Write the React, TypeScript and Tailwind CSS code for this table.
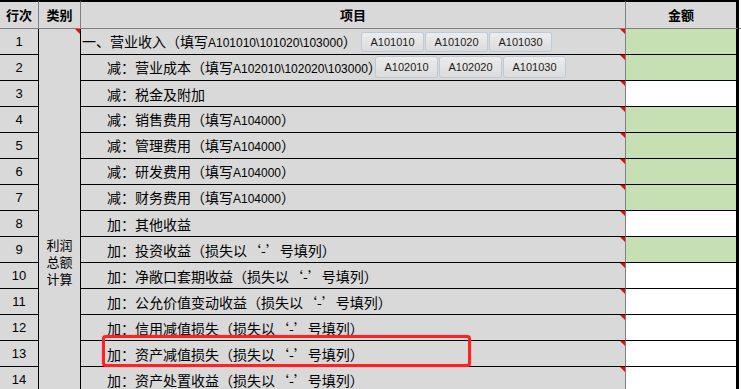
import React from "react";

type Row = {
  n: number;
  text: string;
  indent: boolean;
  green: boolean;
};

const rows: Row[] = [
  { n: 1, text: "一、营业收入（填写A101010\\101020\\103000）", indent: false, green: true },
  { n: 2, text: "减：营业成本（填写A102010\\102020\\103000）", indent: true, green: true },
  { n: 3, text: "减：税金及附加", indent: true, green: false },
  { n: 4, text: "减：销售费用（填写A104000）", indent: true, green: true },
  { n: 5, text: "减：管理费用（填写A104000）", indent: true, green: true },
  { n: 6, text: "减：研发费用（填写A104000）", indent: true, green: true },
  { n: 7, text: "减：财务费用（填写A104000）", indent: true, green: true },
  { n: 8, text: "加：其他收益", indent: true, green: false },
  { n: 9, text: "加：投资收益（损失以‘-’号填列）", indent: true, green: true },
  { n: 10, text: "加：净敞口套期收益（损失以‘-’号填列）", indent: true, green: false },
  { n: 11, text: "加：公允价值变动收益（损失以‘-’号填列）", indent: true, green: false },
  { n: 12, text: "加：信用减值损失（损失以‘-’号填列）", indent: true, green: false },
  { n: 13, text: "加：资产减值损失（损失以‘-’号填列）", indent: true, green: false },
  { n: 14, text: "加：资产处置收益（损失以‘-’号填列）", indent: true, green: false },
];

// Latin letters and digits are set in a narrower Latin face, the rest in the CJK face.
function CellText({ text }: { text: string }) {
  const parts = text.split(/([A-Za-z0-9\\]+)/).filter((p) => p.length > 0);
  return (
    <span className="whitespace-nowrap leading-[16px] text-black">
      {parts.map((p, i) =>
        /^[A-Za-z0-9\\]+$/.test(p) ? (
          <span key={i} className="font-['Liberation_Sans',sans-serif] text-[12px]">
            {p}
          </span>
        ) : (
          <span key={i} className="font-['Noto_Sans_CJK_SC',sans-serif] text-[14px]">
            {p}
          </span>
        )
      )}
    </span>
  );
}

function CommentMark() {
  return (
    <span className="absolute right-0 top-0 h-0 w-0 border-l-[5px] border-t-[5px] border-l-transparent border-t-[#ff0000]" />
  );
}

function SheetButton({ label, tall }: { label: string; tall: boolean }) {
  return (
    <div
      className={
        tall
          ? "flex h-[22px] w-[63px] items-center justify-center rounded-[3px] border border-[#bccadb] bg-gradient-to-b from-[#ececec] to-[#dcdcdc] font-['Liberation_Sans',sans-serif] text-[11px] text-[#1c1c1c]"
          : "flex h-[20px] w-[63px] items-center justify-center rounded-[3px] border border-[#bccadb] bg-gradient-to-b from-[#ececec] to-[#dcdcdc] font-['Liberation_Sans',sans-serif] text-[11px] text-[#1c1c1c]"
      }
    >
      {label}
    </div>
  );
}

export default function App() {
  return (
    <div className="relative h-[389px] w-[741px] overflow-hidden bg-white">
      <div className="grid grid-cols-[39px_42px_545px_113px_1fr] grid-rows-[29px_repeat(14,26px)]">
        {/* header row */}
        <div className="flex items-center justify-center border-b border-r border-t-2 border-b-[#808080] border-r-[#808080] border-t-black bg-[#d9d9d9] font-['Noto_Sans_CJK_SC',sans-serif] text-[13px] font-bold text-black">
          行次
        </div>
        <div className="flex items-center justify-center border-b border-r border-t-2 border-b-[#808080] border-r-[#808080] border-t-black bg-[#d9d9d9] font-['Noto_Sans_CJK_SC',sans-serif] text-[13px] font-bold text-black">
          类别
        </div>
        <div className="flex items-center justify-center border-b border-r border-t-2 border-b-[#808080] border-r-[#808080] border-t-black bg-[#d9d9d9] font-['Noto_Sans_CJK_SC',sans-serif] text-[13px] font-bold text-black">
          项目
        </div>
        <div className="flex items-center justify-center border-b border-r-[3px] border-t-2 border-b-[#808080] border-r-black border-t-black bg-[#d9d9d9] font-['Noto_Sans_CJK_SC',sans-serif] text-[13px] font-bold text-black">
          金额
        </div>
        <div className="border-b border-b-[#808080]" />

        {rows.map((r) => (
          <React.Fragment key={r.n}>
            <div className="flex items-center justify-center border-b border-r border-black bg-[#d9d9d9] font-['Liberation_Sans',sans-serif] text-[13px] text-black">
              {r.n}
            </div>
            {r.n === 1 && (
              <div className="relative row-span-14 flex flex-col items-center border-r border-black bg-[#d9d9d9] pt-[207px] font-['Noto_Sans_CJK_SC',sans-serif] text-[13px] leading-[17px] text-black">
                <CommentMark />
                <span>利润</span>
                <span>总额</span>
                <span>计算</span>
              </div>
            )}
            <div
              className={
                r.indent
                  ? "relative flex items-center border-b border-r border-b-black border-r-[#808080] bg-[#d9d9d9] pl-[26px]"
                  : "relative flex items-center border-b border-r border-b-black border-r-[#808080] bg-[#d9d9d9] pl-[1px]"
              }
            >
              <CellText text={r.text} />
              <CommentMark />
              {r.n === 1 && (
                <div className="absolute left-[280px] top-[3px] flex gap-[1px]">
                  <SheetButton label="A101010" tall={false} />
                  <SheetButton label="A101020" tall={false} />
                  <SheetButton label="A101030" tall={false} />
                </div>
              )}
              {r.n === 2 && (
                <div className="absolute left-[294px] top-[1px] flex gap-[1px]">
                  <SheetButton label="A102010" tall={true} />
                  <SheetButton label="A102020" tall={true} />
                  <SheetButton label="A101030" tall={true} />
                </div>
              )}
            </div>
            <div
              className={
                r.green
                  ? "border-b border-r-[3px] border-black bg-[#c6e0b4]"
                  : "border-b border-r-[3px] border-black bg-white"
              }
            />
            <div className="bg-white" />
          </React.Fragment>
        ))}
      </div>

      {/* highlight frame around row 13 */}
      <div className="absolute left-[102px] top-[335px] h-[32px] w-[369px] rounded-[4px] border-[3px] border-[#ff2222] shadow-[0_0_1px_#ff2222]" />
    </div>
  );
}
